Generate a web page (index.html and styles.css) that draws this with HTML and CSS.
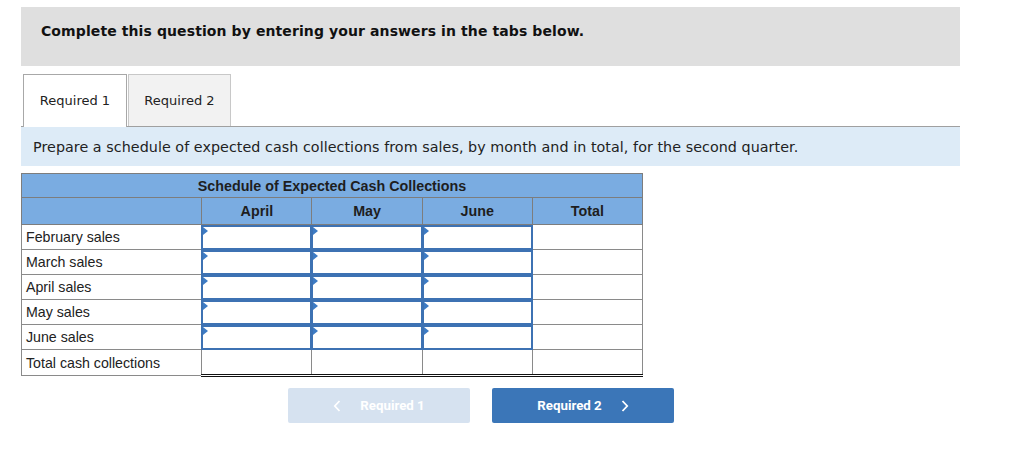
FILE: index.html
```html
<!DOCTYPE html>
<html>
<head>
<meta charset="utf-8">
<link rel="stylesheet" href="styles.css">
</head>
<body>
<div class="page">
  <div class="banner">Complete this question by entering your answers in the tabs below.</div>
  <div class="tabs">
    <div class="tab active">Required 1</div>
    <div class="tab">Required 2</div>
  </div>
  <div class="prompt">Prepare a schedule of expected cash collections from sales, by month and in total, for the second quarter.</div>
  <table class="sched">
    <colgroup>
      <col class="c-label"><col class="c-num"><col class="c-num"><col class="c-num"><col class="c-num">
    </colgroup>
    <thead>
      <tr class="h1"><th colspan="5" class="title">Schedule of Expected Cash Collections</th></tr>
      <tr class="h2"><th></th><th>April</th><th>May</th><th>June</th><th>Total</th></tr>
    </thead>
    <tbody>
      <tr><td class="label">February sales</td><td class="in"><div class="box"></div></td><td class="in"><div class="box"></div></td><td class="in"><div class="box"></div></td><td></td></tr>
      <tr><td class="label">March sales</td><td class="in"><div class="box"></div></td><td class="in"><div class="box"></div></td><td class="in"><div class="box"></div></td><td></td></tr>
      <tr><td class="label">April sales</td><td class="in"><div class="box"></div></td><td class="in"><div class="box"></div></td><td class="in"><div class="box"></div></td><td></td></tr>
      <tr><td class="label">May sales</td><td class="in"><div class="box"></div></td><td class="in"><div class="box"></div></td><td class="in"><div class="box"></div></td><td></td></tr>
      <tr><td class="label">June sales</td><td class="in"><div class="box"></div></td><td class="in"><div class="box"></div></td><td class="in"><div class="box"></div></td><td></td></tr>
      <tr class="total"><td class="label">Total cash collections</td><td class="dbl"></td><td class="dbl"></td><td class="dbl"></td><td class="dbl"></td></tr>
    </tbody>
  </table>
  <div class="nav">
    <div class="btn prev"><svg class="chev" width="8" height="12" viewBox="0 0 8 12"><path d="M6.5 1 L1.8 6 L6.5 11" fill="none" stroke="#fff" stroke-width="1.8"/></svg><span>Required 1</span></div>
    <div class="btn next"><span>Required 2</span><svg class="chev" width="8" height="12" viewBox="0 0 8 12"><path d="M1.5 1 L6.2 6 L1.5 11" fill="none" stroke="#fff" stroke-width="1.8"/></svg></div>
  </div>
</div>
</body>
</html>
```
FILE: styles.css
```css
html, body { margin: 0; padding: 0; background: #fff; }
.page { padding: 7px 0 0 21px; width: 939px; font-family: "DejaVu Sans", Verdana, sans-serif; }
.banner {
  background: #dfdfdf;
  height: 59px;
  box-sizing: border-box;
  padding: 16px 0 0 20px;
  font-weight: bold;
  font-size: 14px;
  color: #111;
  letter-spacing: 0.1px;
}
.tabs {
  display: flex;
  gap: 1px;
  padding: 8px 0 0 2px;
  border-bottom: 1px solid #a0a0a0;
  height: 52px;
}
.tab {
  width: 103px;
  box-sizing: border-box;
  border: 1px solid #c8c8c8;
  border-bottom: none;
  background: #f2f2f2;
  font-size: 13px;
  color: #222;
  display: flex;
  align-items: center;
  justify-content: center;
  padding-bottom: 1px;
}
.tab.active {
  width: 104px;
  background: #fff;
  border-color: #a8a8a8;
  height: 53px;
  position: relative;
  z-index: 1;
}
.prompt {
  background: #ddebf7;
  height: 39px;
  box-sizing: border-box;
  padding: 12px 0 0 12px;
  font-size: 14.3px;
  color: #222;
  letter-spacing: 0.05px;
}
.sched {
  margin-top: 7px;
  border-collapse: collapse;
  table-layout: fixed;
  width: 622px;
  font-family: "Liberation Sans", Arial, sans-serif;
  font-size: 14.2px;
  color: #222;
}
.c-label { width: 180px; }
.c-num { width: 110px; }
.sched th {
  background: #7aace1;
  border: 1px solid #7d7d7d;
  font-weight: bold;
  padding: 0;
  color: #1e1e1e;
  font-size: 14.3px;
}
.sched .h1 th { height: 23px; }
.sched .h1 .title { text-align: center; }
.sched .h2 th { height: 26px; }
.sched td {
  border: 1px solid #8a8a8a;
  height: 24px;
  padding: 0;
  background: #fff;
}
.sched td.label { padding: 0 0 0 4px; }
.sched td.in { padding: 0; }
.box {
  height: 25px;
  box-sizing: border-box;
  border: 2px solid #3d72b3;
  margin: -1px;
  position: relative;
}
.box::before {
  content: "";
  position: absolute;
  left: 0;
  top: 0;
  border-left: 5px solid #3d7bc4;
  border-top: 4px solid transparent;
  border-bottom: 4px solid transparent;
}
.sched td.dbl { border-bottom: 3px double #111; }
.nav {
  display: flex;
  gap: 22px;
  padding: 11px 0 0 267px;
}
.btn {
  width: 182px;
  height: 35px;
  border-radius: 2px;
  display: flex;
  align-items: center;
  justify-content: center;
  font-family: Roboto, "Noto Sans", sans-serif;
  font-weight: bold;
  font-size: 13.3px;
  color: #fff;
  gap: 19px;
}
.btn.prev { background: #d6e2f0; }
.btn.next { background: #3b76b8; }
.chev { display: block; }
```
